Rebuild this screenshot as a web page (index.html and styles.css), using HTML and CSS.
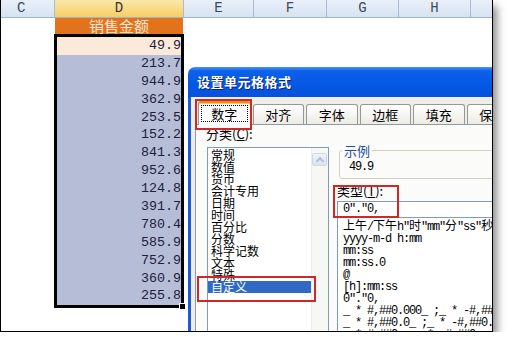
FILE: index.html
```html
<!DOCTYPE html>
<html>
<head>
  <meta charset="UTF-8">
  <title>设置单元格格式</title>
  <link rel="stylesheet" href="styles.css">
</head>
<body>
  <div class="shot">
    <div class="col-heads">
      <div class="ch w-c">C</div>
      <div class="ch w-d active">D</div>
      <div class="ch w-e">E</div>
      <div class="ch w-f">F</div>
      <div class="ch w-g">G</div>
      <div class="ch w-h">H</div>
      <div class="ch w-i"></div>
    </div>
    <div class="field-head">销售金额</div>
    <div class="selection">
      <div class="cell current">49.9</div>
      <div class="cell">213.7</div>
      <div class="cell">944.9</div>
      <div class="cell">362.9</div>
      <div class="cell">253.5</div>
      <div class="cell">152.2</div>
      <div class="cell">841.3</div>
      <div class="cell">952.6</div>
      <div class="cell">124.8</div>
      <div class="cell">391.7</div>
      <div class="cell">780.4</div>
      <div class="cell">585.9</div>
      <div class="cell">752.9</div>
      <div class="cell">360.9</div>
      <div class="cell">255.8</div>
      <span class="fill-handle"></span>
    </div>

    <!-- format cells dialog, sits over the sheet -->
    <div class="dialog">
      <div class="title-bar">设置单元格格式</div>
      <div class="dialog-body">
        <div class="tabs">
          <span class="tab selected"><span class="focus">数字</span></span>
          <span class="tab">对齐</span>
          <span class="tab">字体</span>
          <span class="tab">边框</span>
          <span class="tab">填充</span>
          <span class="tab">保护</span>
        </div>
        <div class="panel">
          <div class="category">
            <div class="label">分类(<u>C</u>):</div>
            <div class="listbox">
              <ul class="items">
                <li>常规</li>
                <li>数值</li>
                <li>货币</li>
                <li>会计专用</li>
                <li>日期</li>
                <li>时间</li>
                <li>百分比</li>
                <li>分数</li>
                <li>科学记数</li>
                <li>文本</li>
                <li>特殊</li>
                <li class="sel">自定义</li>
              </ul>
              <div class="scrollbar"><span class="arrow-up"></span></div>
            </div>
          </div>
          <div class="detail">
            <fieldset class="sample">
              <legend>示例</legend>
              <div class="sample-value mono">49.9</div>
            </fieldset>
            <div class="label type-label">类型(<u>T</u>):</div>
            <div class="type-input mono">0"."0,</div>
            <ul class="type-list mono">
              <li><span class="cj">上午</span>/<span class="cj">下午</span>h"<span class="cj">时</span>"mm"<span class="cj">分</span>"ss"<span class="cj">秒</span>"</li>
              <li>yyyy-m-d h:mm</li>
              <li>mm:ss</li>
              <li>mm:ss.0</li>
              <li>@</li>
              <li>[h]:mm:ss</li>
              <li>0"."0,</li>
              <li>_ * #,##0.000_ ;_ * -#,##0.000_ </li>
              <li>_ * #,##0.0_ ;_ * -#,##0.0_ </li>
              <li>_ * #,##0_ ;_ * -#,##0_ </li>
            </ul>
          </div>
        </div>
      </div>
      <span class="mark mark-tab"></span>
      <span class="mark mark-custom"></span>
      <span class="mark mark-type"></span>
    </div>
  </div>
</body>
</html>
```

FILE: styles.css
```css
* { box-sizing: border-box; }
body { margin: 0; background: #fff; font-family: "Noto Sans CJK SC", sans-serif; color: #000; }
ul { list-style: none; margin: 0; padding: 0; }

/* --- screenshot frame --- */
.shot {
  position: relative;
  width: 493px;
  height: 332px;
  border: 1px solid #000;
  border-top: 0;
  overflow: hidden;
  background: #fff;
  box-shadow: 4px 6px 8px rgba(0, 0, 0, 0.45);
}

/* --- sheet --- */
.col-heads {
  display: flex;
  height: 18px;
  border-bottom: 1px solid #9fb4cf;
  background: linear-gradient(#e9f0f9, #d7e3f2);
}
.ch {
  flex: none;
  border-right: 1px solid #a9bbd3;
  font: 14px/17px "Liberation Mono", monospace;
  color: #3c4a60;
  text-align: center;
}
.w-c { width: 54px; text-align: left; padding-left: 16px; }
.w-d { width: 129px; }
.w-e { width: 70px; }
.w-f { width: 73px; }
.w-g { width: 72px; }
.w-h { width: 72px; }
.w-i { flex: 1; border-right: 0; }
.ch.active { background: linear-gradient(#fae7aa, #f6cf62); color: #333; }

.field-head {
  margin-left: 54px;
  width: 128px;
  height: 16px;
  background: #e2731c;
  color: #fce6d2;
  font-size: 15px;
  line-height: 16px;
  text-align: center;
}

.selection {
  position: relative;
  margin-left: 53px;
  width: 130px;
  border: 3px solid #000;
  background: #b6bdd7;
}
.cell {
  height: 17.9px;
  font: 13.33px/17.9px "Liberation Mono", monospace;
  text-align: right;
  color: #1c2040;
}
.cell.current { background: #fbe9da; }
.fill-handle {
  position: absolute;
  right: -5px;
  bottom: -5px;
  width: 7px;
  height: 7px;
  background: #000;
  border: 1px solid #fff;
}

/* --- dialog --- */
.dialog {
  position: absolute;
  left: 187px;
  top: 67px;
  width: 330px;
  height: 270px;
}
.title-bar {
  height: 30px;
  border-radius: 7px 7px 0 0;
  background: linear-gradient(#4a94f8 0, #0c60ea 4px, #0558e4 60%, #0551dc 100%);
  color: #fff;
  font-size: 13px;
  font-weight: bold;
  line-height: 30px;
  padding-left: 9px;
  letter-spacing: 0.5px;
  text-shadow: 1px 1px #0a2278;
}
.dialog-body {
  height: 240px;
  border-left: 3px solid #1d5ada;
  background: #efede4;
  padding-left: 4px;
}
.tabs {
  display: flex;
  align-items: flex-end;
  gap: 2px;
  height: 27px;
  padding-left: 3px;
}
.tab {
  width: 52px;
  height: 20px;
  border: 1px solid #919b9c;
  border-bottom: 0;
  border-radius: 3px 3px 0 0;
  background: linear-gradient(#fff, #ecebe4);
  font-size: 13px;
  line-height: 19px;
  text-align: center;
}
.tab.selected {
  position: relative;
  z-index: 1;
  width: 53px;
  height: 24px;
  margin-bottom: -1px;
  padding: 2px 2px 0;
  background: #fcfcfe;
  border-top: 2px solid #e68b2c;
  box-shadow: inset 0 1px #ffc83c;
}
.focus {
  display: block;
  height: 17px;
  border: 1px dotted #000;
  line-height: 15px;
}

.panel {
  display: flex;
  height: 215px;
  border: 1px solid #919b9c;
  border-right: 0;
  background: #fbfbf9;
  padding: 1px 0 0 10px;
}
.label { font-size: 13px; line-height: 15px; }
.category { width: 123px; flex: none; }
.listbox {
  position: relative;
  height: 200px;
  margin: 6px 0 0 1px;
  border: 1px solid #7f9db9;
  background: #fff;
  padding-top: 1px;
}
.items li {
  width: 103px;
  height: 12px;
  padding-left: 3px;
  font-size: 12px;
  line-height: 12px;
}
.items li.sel { background: #316ac5; color: #fff; }
.scrollbar {
  position: absolute;
  top: 0;
  right: 0;
  bottom: 0;
  width: 17px;
  background: #f7f7f3;
  border-left: 1px solid #ececea;
}
.arrow-up {
  position: relative;
  display: block;
  height: 13px;
  margin: 5px 1px 0 0;
  border: 1px solid #cfd7e6;
  border-radius: 2px;
  background: linear-gradient(#eef2fa, #dde4f0);
}
.arrow-up::after {
  content: "";
  position: absolute;
  left: 4px;
  top: 4px;
  width: 4px;
  height: 4px;
  border-left: 2px solid #b6bfcf;
  border-top: 2px solid #b6bfcf;
  transform: rotate(45deg);
}

.detail { flex: 1; margin-left: 8px; }
.mono {
  font: 12px/12px "Liberation Mono", "Noto Sans CJK SC", monospace;
  letter-spacing: -1.2px;
}
.mono .cj { letter-spacing: 0; }
.sample {
  min-width: 0;
  height: 36px;
  margin: 17px 0 0 2px;
  padding: 3px 0 0 0;
  border: 1px solid #d0d0bf;
  border-radius: 3px;
}
.sample legend {
  margin-left: 2px;
  padding: 0 2px;
  font-size: 13px;
  line-height: 15px;
  color: #1a4ea3;
}
.sample-value { padding-left: 9px; }
.type-label { margin-top: 4px; }
.type-input {
  height: 17px;
  margin-top: 3px;
  border: 1px solid #7f9db9;
  background: #fff;
  padding-left: 5px;
  line-height: 15px;
  white-space: nowrap;
}
.type-list {
  height: 130px;
  border: 1px solid #7f9db9;
  border-top: 0;
  background: #fff;
  padding: 3px 0 0 5px;
  white-space: nowrap;
}
.type-list li { height: 12px; }

/* --- red highlight marks --- */
.mark {
  position: absolute;
  z-index: 2;
  border: 2px solid #d02828;
}
.mark-tab { left: 7px; top: 32px; width: 57px; height: 31px; }
.mark-custom { left: 9px; top: 209px; width: 119px; height: 26px; }
.mark-type { left: 145px; top: 118px; width: 66px; height: 33px; }
```
